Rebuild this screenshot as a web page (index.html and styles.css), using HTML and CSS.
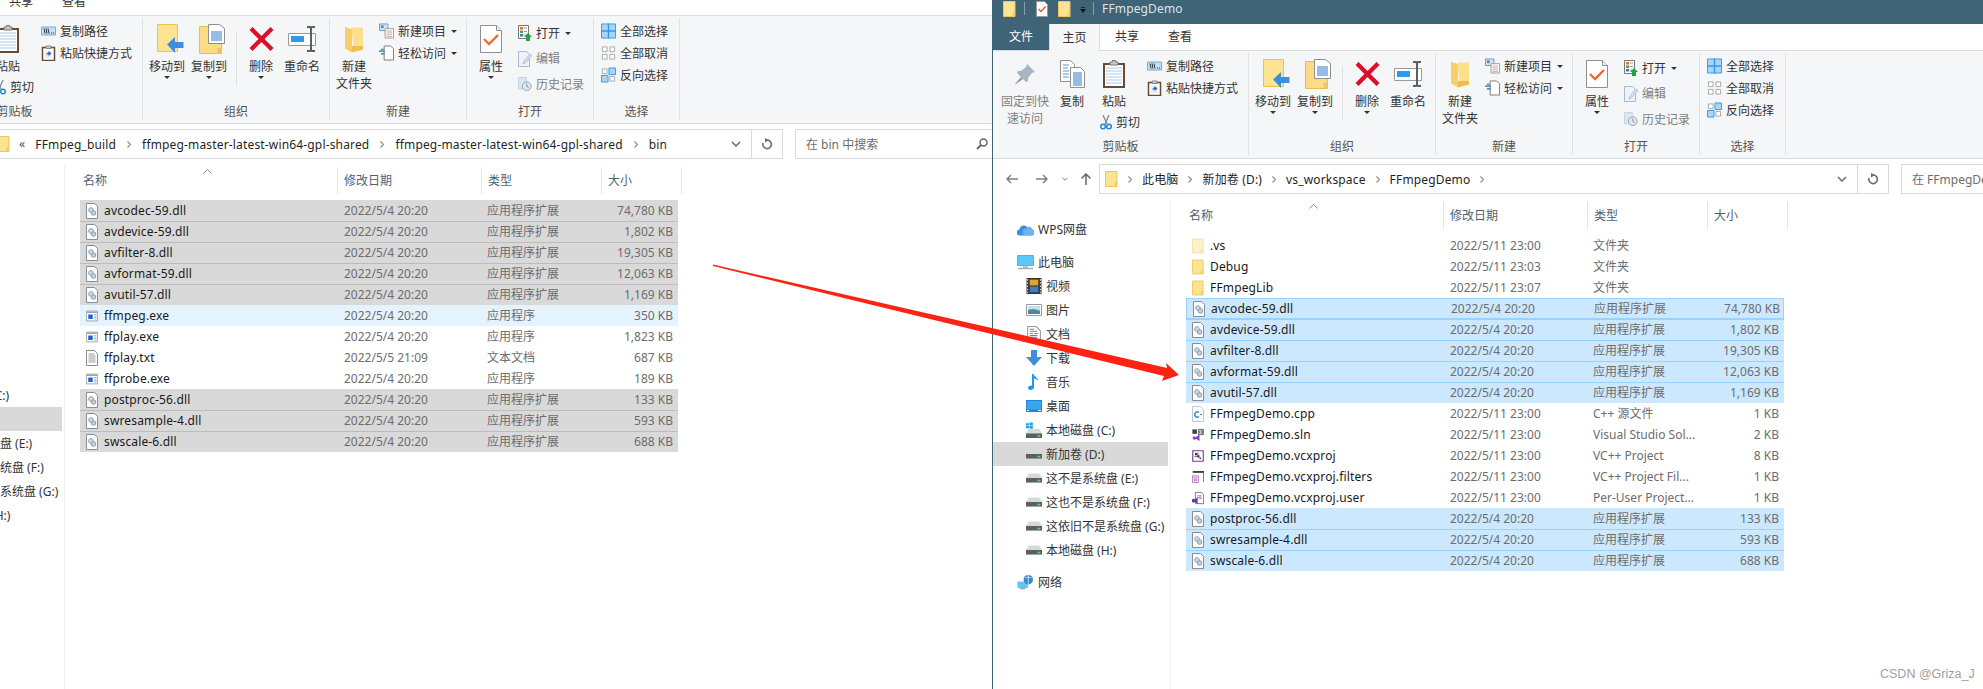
FILE: index.html
```html
<!DOCTYPE html>
<html lang="zh-CN">
<head>
    <meta charset="UTF-8">
    <title>FFmpegDemo</title>
    <link rel="stylesheet" href="styles.css">
</head>
<body>
<svg class="sprite" xmlns="http://www.w3.org/2000/svg">
    <symbol id="folder" viewBox="0 0 13 16"><path d="M.5.5h11.500v15H.5z" fill="#fde492" stroke="#efc65c"/><path d="M9.500 11.500h2.500v4H9.500z" fill="#f3cc63"/></symbol>
    <symbol id="page-check" viewBox="0 0 12 16"><path d="M.5.5h8l3 3v12H.5z" fill="#fff" stroke="#999"/><path d="M2.500 8l2.500 2.500 4.500-5" fill="none" stroke="#e8602a" stroke-width="1.500"/></symbol>
    <symbol id="pin" viewBox="0 0 22 22"><path d="M13 1l8 8-3 1-4 5 0 3-2 1-9-9 1-2 3 0 5-4z" fill="#a9b4c2"/><path d="M7 14l-6 7 1 0 7-5z" fill="#8d98a6"/></symbol>
    <symbol id="docs" viewBox="0 0 25 28"><path d="M.5.5h10l4 4v17H.5z" fill="#fff" stroke="#8f8f8f"/><path d="M10.500 7.500h10l4 4v16h-14z" fill="#fff" stroke="#8f8f8f"/><path d="M3 5h6M3 8h5M3 11h6M3 14h6M3 17h6" stroke="#5b9bd5"/><path d="M13 13h9M13 15h9M13 17h9M13 19h9M13 21h9M13 23h9M13 25h9" stroke="#2f78cf"/></symbol>
    <symbol id="clipboard" viewBox="0 0 22 28"><path d="M1 4h20v23H1z" fill="#fff" stroke="#6b4a33" stroke-width="2"/><path d="M3 8h16M3 11h16M3 14h16M3 17h16M3 20h16M3 23h16" stroke="#a9cdea"/><path d="M7 4V2h2.500V.5h3V2H15v3H7z" fill="#c9c9c9" stroke="#777"/></symbol>
    <symbol id="copy-path" viewBox="0 0 15 9"><path d="M.5.5h14v8H.5z" fill="#bfe0f7" stroke="#7fa9c7"/><path d="M3 2l1 5M5 2l1 5M7 2l1 5" stroke="#333"/><path d="M10 6.500h3.500" stroke="#333" stroke-dasharray="1 1"/></symbol>
    <symbol id="paste-link" viewBox="0 0 14 16"><path d="M1 2.500h12v13H1z" fill="#fff" stroke="#6b4a33" stroke-width="1.500"/><path d="M4.500 2.500V1h5v2.500h-5z" fill="#ccc" stroke="#777" stroke-width=".8"/><path d="M3.500 6h7v7h-7z" fill="#e8eef5"/><path d="M5 12V9.500h2V11l3-2.500L7 6v1.500C5.500 7.500 4.500 9 5 12z" fill="#2f66b5"/></symbol>
    <symbol id="scissors" viewBox="0 0 12 16"><path d="M3 1l4 9M9 1L5 10" stroke="#7d8894" stroke-width="1.300" fill="none"/><circle cx="3" cy="12.500" r="2.300" fill="none" stroke="#1f8ad6" stroke-width="1.500"/><circle cx="9" cy="12.500" r="2.300" fill="none" stroke="#1f8ad6" stroke-width="1.500"/></symbol>
    <symbol id="move-to" viewBox="0 0 27 30"><path d="M.5.5h20v27H.5z" fill="#fde492" stroke="#ecc14f"/><path d="M10 20.500L18 13v5h8.500v6H18v5z" fill="#3d8fd9"/></symbol>
    <symbol id="copy-to" viewBox="0 0 27 30"><path d="M.5 2.500h22v27H.5z" fill="#fbdc85" stroke="#e6bd58"/><path d="M18.500 24h4v5.500h-4z" fill="#efc560"/><path d="M9.500.5h11l5 4v15h-16z" fill="#fff" stroke="#8f8f8f"/><path d="M12 8h11M12 10h11M12 12h11M12 14h11M12 16h11" stroke="#2f78cf"/></symbol>
    <symbol id="delete" viewBox="0 0 25 24"><path d="M2 1.500l21 21M23 1.500l-21 21" stroke="#d8102a" stroke-width="4.300"/></symbol>
    <symbol id="rename" viewBox="0 0 28 26"><path d="M.5 7.500h27v12H.5z" fill="#fff" stroke="#9a9a9a"/><path d="M3 10h13v6H3z" fill="#2f9ae8"/><path d="M19 1h3l1 1.500L24 1h3M19 25h3l1-1.500 1 1.500h3M23 2v22" fill="none" stroke="#5f5f5f" stroke-width="2"/></symbol>
    <symbol id="new-folder" viewBox="0 0 18 27"><path d="M6 1.500l12 0v22H9z" fill="#fde08c"/><path d="M0 .5l7 3v23l-7-4z" fill="#f6cf6c"/><path d="M7 26.500l11-3V20H7z" fill="#eebf4f"/></symbol>
    <symbol id="new-item" viewBox="0 0 16 16"><path d="M.5.5h9v7H.5z" fill="#d4e6f5" stroke="#6c97b8"/><path d="M2 2h3v3H2z" fill="#4f8fc4"/><path d="M6.500 5.500h9v10h-9z" fill="#fff" stroke="#9a9a9a"/><path d="M8 8h6M8 10h6M8 12h6M8 14h6" stroke="#d9a0a0"/></symbol>
    <symbol id="easy-access" viewBox="0 0 16 16"><path d="M5.500.5h7l3 3v12h-10z" fill="#fff" stroke="#777"/><path d="M0 6h6M2 9h4M2 4h3" stroke="#1f6fb5" stroke-width="1.300"/></symbol>
    <symbol id="properties" viewBox="0 0 22 28"><path d="M.5.500h16l5 5v22H.5z" fill="#fff" stroke="#8f8f8f"/><path d="M16.500.5v5h5" fill="#eee" stroke="#8f8f8f"/><path d="M4 14l5 5 9-9" fill="none" stroke="#ef6a2a" stroke-width="2.300"/></symbol>
    <symbol id="open" viewBox="0 0 14 16"><path d="M.5.5h10v13H.5z" fill="#fff" stroke="#777"/><path d="M2 2h3v2.500H2z" fill="#ef6a2a"/><path d="M2 5.500h3V8H2z" fill="#39a845"/><path d="M2 9h3v2.500H2z" fill="#2f78cf"/><path d="M6 3h3M6 6.500h3M6 10h2" stroke="#999"/><path d="M10 8l4 4h-2v4H8v-4H6z" fill="#1ea838"/></symbol>
    <symbol id="edit" viewBox="0 0 14 16"><path d="M.5.5h8l3 3v12H.5z" fill="#eef3f9" stroke="#a9bad0"/><path d="M5 13l1-3 6-7 2 1.500-6 7z" fill="#d5dfeb" stroke="#a9bad0" stroke-width=".8"/></symbol>
    <symbol id="history" viewBox="0 0 16 16"><path d="M.5.5h9v13H.5z" fill="#dde5ef" stroke="#c2cfdf"/><circle cx="10" cy="10.500" r="5" fill="#dfe6ef" stroke="#8d9db3"/><path d="M10 7.500v3l2 1.500" fill="none" stroke="#73859d"/></symbol>
    <symbol id="select-all" viewBox="0 0 16 16"><path d="M.5.5h15v15H.5z" fill="#a9d4f5" stroke="#2f9ae8"/><path d="M8 0v16M0 8h16" stroke="#2f9ae8" stroke-width="1.500"/></symbol>
    <symbol id="select-none" viewBox="0 0 16 16"><path d="M1.500 1.500h5v5h-5zM9.500 1.500h5v5h-5zM1.500 9.500h5v5h-5zM9.500 9.500h5v5h-5z" fill="#fff" stroke="#a6a6a6"/></symbol>
    <symbol id="select-inv" viewBox="0 0 16 16"><path d="M1.500 1.500h5v5h-5zM9.500 9.500h5v5h-5z" fill="#fff" stroke="#a6a6a6"/><path d="M8.500.5h7v7h-7zM.5 8.500h7v7h-7z" fill="#a9d4f5" stroke="#2f9ae8"/></symbol>
    <symbol id="dll" viewBox="0 0 12 16"><path d="M.5.5h8l3 3v12H.5z" fill="#fff" stroke="#8c8c8c"/><circle cx="5" cy="7" r="2.300" fill="#d4dde6" stroke="#8ca0b3"/><circle cx="7.500" cy="10" r="2.300" fill="#c3ced9" stroke="#8ca0b3"/></symbol>
    <symbol id="exe" viewBox="0 0 16 14"><path d="M.5.5h15v13H.5z" fill="#fff" stroke="#8c8c8c"/><path d="M1 1h14v2H1z" fill="#9aa6b2"/><path d="M3 5h6v6H3z" fill="#1669d2"/><path d="M11 5h3M11 7h3M11 9h3M11 11h3" stroke="#999"/></symbol>
    <symbol id="txt" viewBox="0 0 12 16"><path d="M.5.5h8l3 3v12H.5z" fill="#fff" stroke="#8c8c8c"/><path d="M2.500 4h6M2.500 6h7M2.500 8h7M2.500 10h7M2.500 12h7" stroke="#999"/></symbol>
    <symbol id="cpp" viewBox="0 0 12 16"><path d="M.5.5h8l3 3v12H.5z" fill="#fff" stroke="#c0c8d0"/><path d="M7 6.500a2.600 2.600 0 1 0 0 4" fill="none" stroke="#3f8fb5" stroke-width="1.500"/><path d="M8 8.500h2" stroke="#3f8fb5"/></symbol>
    <symbol id="sln" viewBox="0 0 16 16"><path d="M0 0h16v8H0z" fill="#fff"/><path d="M.5.500h6v6h-6z" fill="#444"/><path d="M8.500.5h7v7h-7z" fill="#fff" stroke="#444"/><path d="M10 2v4M12 2h2v4h-2z" fill="none" stroke="#444"/><path d="M1 11l2-1.500 2 1.500 5-4v9l-5-3-2 1.500-2-1.500z" fill="#8a3fc4"/></symbol>
    <symbol id="vcxproj" viewBox="0 0 16 16"><path d="M1 1h14v14H1z" fill="#fff" stroke="#7a3b96" stroke-width="1.500"/><path d="M4 4h3v3H4zM7 7h3v3H7zM10 10h2v2h-2z" fill="#333"/><path d="M7.500 3.500h1v3h-1zM3.500 8h3v1h-3z" fill="#333"/></symbol>
    <symbol id="filters" viewBox="0 0 16 16"><path d="M1.500 1h14v14" fill="none" stroke="#444"/><path d="M1 0h15v2.500H1z" fill="#444"/><path d="M.5 6.500h8v9h-8z" fill="#fff" stroke="#9b4fb0"/><path d="M2 9h5M2 11h5M2 13h5" stroke="#9b4fb0"/></symbol>
    <symbol id="user" viewBox="0 0 16 16"><path d="M4.500.5h8l3 3v12h-11z" fill="#fff" stroke="#555"/><path d="M7 5h6M7 7h6M9 9h4" stroke="#777"/><path d="M0 10l2-1.500 1.500 1.500 4-3v8.500l-4-2.500-1.500 1.500-2-1.500z" fill="#6a2fa8"/></symbol>
    <symbol id="cloud" viewBox="0 0 17 12"><path d="M3 12a3 3 0 0 1-.5-6A4.500 4.500 0 0 1 11 4.500a3.800 3.800 0 0 1 2 7.500z" fill="#3b8fe0"/><path d="M9 12a3.500 3.500 0 0 1 0-7 3.500 3.500 0 0 1 6.500 1A3 3 0 0 1 14 12z" fill="#6db2ee"/></symbol>
    <symbol id="monitor" viewBox="0 0 17 15"><path d="M.5.5h16v10H.5z" fill="#5cc8f5" stroke="#7da5bd"/><path d="M6 11h5v2H6z" fill="#b8c6d0"/><path d="M1 13.500h15" stroke="#9db0bd" stroke-width="1.500"/></symbol>
    <symbol id="film" viewBox="0 0 14 15"><path d="M0 0h14v15H0z" fill="#333"/><path d="M3 1.500h8v5.500H3z" fill="#e5a02e"/><path d="M3 8h8v5.500H3z" fill="#3f7fc4"/><path d="M1 1v13M13 1v13" stroke="#ddd" stroke-dasharray="1.500 1.500"/></symbol>
    <symbol id="picture" viewBox="0 0 16 12"><path d="M.5.500h15v11H.5z" fill="#fff" stroke="#9a9a9a"/><path d="M2 2h12v4H2z" fill="#c3def2"/><path d="M2 6l5-1 7 1.500V10H2z" fill="#4d8a8f"/></symbol>
    <symbol id="doc" viewBox="0 0 13 15"><path d="M.5.5h8l4 4v10H.5z" fill="#fff" stroke="#999"/><path d="M2.500 3h4M2.500 5h7M2.500 7h3M7 7h3M2.500 9h7M2.500 11h7" stroke="#3f8fd5"/></symbol>
    <symbol id="download" viewBox="0 0 16 16"><path d="M5 0h6v7h5l-8 9-8-9h5z" fill="#3d8ede"/></symbol>
    <symbol id="music" viewBox="0 0 12 16"><path d="M4 0h1.500c.5 3 4.500 3.500 5 7-1-1.500-3-2.500-4.500-2.500V13c0 1.800-1.500 3-3.300 3C1 16 0 15 0 13.800c0-1.500 2-2.800 4-2.300z" fill="#1a9aee"/></symbol>
    <symbol id="screen" viewBox="0 0 16 12"><path d="M0 0h16v12H0z" fill="#1b87d8"/><path d="M1 1h14v8.500H1z" fill="#37a6ee"/><path d="M1 10.500h2M12 10.500h3" stroke="#dff"/></symbol>
    <symbol id="drive" viewBox="0 0 14 8"><path d="M2.500 0h9L14 4H0z" fill="#d5d9dc"/><path d="M0 4h14v4H0z" fill="#5c5f62"/><path d="M10 5.500h2.500v1.500H10z" fill="#5fd35f"/></symbol>
    <symbol id="drive-win" viewBox="0 0 14 14"><path d="M0 1h2.500v2H0zM3 .5h3V3H3zM0 3.500h2.500v2H0zM3 3.500h3V6H3z" fill="#1ba1e8"/><path d="M2.500 6h9L14 10H0z" fill="#d5d9dc"/><path d="M0 10h14v4H0z" fill="#5c5f62"/><path d="M10 11.500h2.500V13H10z" fill="#5fd35f"/></symbol>
    <symbol id="network" viewBox="0 0 17 16"><path d="M0 7h11v7H0z" fill="#5cc8f5"/><path d="M3 14.500h5" stroke="#8aa" stroke-width="1.500"/><circle cx="11.500" cy="5" r="5" fill="#3f86c8"/><path d="M8 3c2-1 4-1 7 0M11.500 0v10" stroke="#bfe0f7" fill="none"/></symbol>
    <symbol id="chevron" viewBox="0 0 4 7"><path d="M.5.500l3 3-3 3" fill="none" stroke="#8a8a8a" stroke-width="1.200"/></symbol>
    <symbol id="chevron-down" viewBox="0 0 10 6"><path d="M1 1l4 4 4-4" fill="none" stroke="#6d6d6d" stroke-width="1.500"/></symbol>
    <symbol id="refresh" viewBox="0 0 12 12"><path d="M6.500 2a4.300 4.300 0 1 1-4.500 3" fill="none" stroke="#6d6d6d" stroke-width="1.600"/><path d="M4 0l4 2-4 2.500z" fill="#6d6d6d"/></symbol>
    <symbol id="search" viewBox="0 0 12 12"><circle cx="7.500" cy="4.500" r="3.500" fill="none" stroke="#666" stroke-width="1.500"/><path d="M5 7l-4 4" stroke="#666" stroke-width="2"/></symbol>
    <symbol id="back" viewBox="0 0 12 10"><path d="M12 5H1M5 1L1 5l4 4" fill="none" stroke="#808080" stroke-width="1.500"/></symbol>
    <symbol id="forward" viewBox="0 0 12 10"><path d="M0 5h11M7 1l4 4-4 4" fill="none" stroke="#808080" stroke-width="1.500"/></symbol>
    <symbol id="up" viewBox="0 0 12 12"><path d="M6 12V1M1.500 5.500L6 1l4.500 4.500" fill="none" stroke="#666" stroke-width="1.500"/></symbol>
</svg>

<div class="desktop">
    <section class="window window-left">
        <div class="window-inner">
            <header class="titlebar">
                <svg class="ic-folder"><use href="#folder"/></svg>
                <span class="title-sep"></span>
                <svg class="ic-page"><use href="#page-check"/></svg>
                <svg class="ic-folder second"><use href="#folder"/></svg>
                <span class="qat-caret"></span>
                <span class="title-sep last"></span>
                <span class="title-text">bin</span>
            </header>
            <nav class="tabs">
                <span class="tab tab-file">文件</span>
                <span class="tab tab-home">主页</span>
                <span class="tab tab-share">共享</span>
                <span class="tab tab-view">查看</span>
            </nav>
            <div class="ribbon">
                <div class="group group-clip">
                    <div class="group-body">
                        <div class="big big-pin disabled"><span class="big-icon"><svg class="ic-pin"><use href="#pin"/></svg></span><span>固定到快<br>速访问</span></div>
                        <div class="big big-copy"><span class="big-icon"><svg class="ic-docs"><use href="#docs"/></svg></span><span>复制</span></div>
                        <div class="paste-col">
                            <div class="big big-paste"><span class="big-icon"><svg class="ic-clipboard"><use href="#clipboard"/></svg></span><span>粘贴</span></div>
                            <div class="small cut"><svg class="ic-small"><use href="#scissors"/></svg>剪切</div>
                        </div>
                        <div class="stack stack-clip">
                            <div class="small"><svg class="ic-small"><use href="#copy-path"/></svg>复制路径</div>
                            <div class="small"><svg class="ic-small"><use href="#paste-link"/></svg>粘贴快捷方式</div>
                        </div>
                    </div>
                    <div class="group-label">剪贴板</div>
                </div>
                <div class="group group-org">
                    <div class="group-body">
                        <div class="big big-move"><span class="big-icon"><svg class="ic-folder-big"><use href="#move-to"/></svg></span><span>移动到</span><i class="caret"></i></div>
                        <div class="big big-move"><span class="big-icon"><svg class="ic-folder-big"><use href="#copy-to"/></svg></span><span>复制到</span><i class="caret"></i></div>
                        <span class="vsep"></span>
                        <div class="big big-delete"><span class="big-icon"><svg class="ic-delete"><use href="#delete"/></svg></span><span>删除</span><i class="caret"></i></div>
                        <div class="big big-rename"><span class="big-icon"><svg class="ic-rename"><use href="#rename"/></svg></span><span>重命名</span></div>
                    </div>
                    <div class="group-label">组织</div>
                </div>
                <div class="group group-new">
                    <div class="group-body">
                        <div class="big big-newfolder"><span class="big-icon"><svg class="ic-newfolder"><use href="#new-folder"/></svg></span><span>新建<br>文件夹</span></div>
                        <div class="stack stack-new">
                            <div class="small"><svg class="ic-small"><use href="#new-item"/></svg>新建项目<i class="caret caret-side"></i></div>
                            <div class="small"><svg class="ic-small"><use href="#easy-access"/></svg>轻松访问<i class="caret caret-side"></i></div>
                        </div>
                    </div>
                    <div class="group-label">新建</div>
                </div>
                <div class="group group-open">
                    <div class="group-body">
                        <div class="big big-prop"><span class="big-icon"><svg class="ic-prop"><use href="#properties"/></svg></span><span>属性</span><i class="caret"></i></div>
                        <div class="stack stack-open">
                            <div class="small"><svg class="ic-small"><use href="#open"/></svg>打开<i class="caret caret-side"></i></div>
                            <div class="small disabled"><svg class="ic-small"><use href="#edit"/></svg>编辑</div>
                            <div class="small disabled"><svg class="ic-small"><use href="#history"/></svg>历史记录</div>
                        </div>
                    </div>
                    <div class="group-label">打开</div>
                </div>
                <div class="group group-select">
                    <div class="group-body">
                        <div class="stack">
                            <div class="small"><svg class="ic-small"><use href="#select-all"/></svg>全部选择</div>
                            <div class="small"><svg class="ic-small"><use href="#select-none"/></svg>全部取消</div>
                            <div class="small"><svg class="ic-small"><use href="#select-inv"/></svg>反向选择</div>
                        </div>
                    </div>
                    <div class="group-label">选择</div>
                </div>
            </div>
            <div class="address-row">
                <div class="nav-btns">
                    <svg class="btn-back"><use href="#back"/></svg>
                    <svg class="btn-forward"><use href="#forward"/></svg>
                    <svg class="btn-down"><use href="#chevron-down"/></svg>
                    <svg class="btn-up"><use href="#up"/></svg>
                </div>
                <div class="address-box">
                    <div class="crumbs">
                        <svg class="ic-folder"><use href="#folder"/></svg>
                        <span class="crumb-more">«</span>
                        <span>FFmpeg_build</span>
                        <svg class="crumb-sep"><use href="#chevron"/></svg>
                        <span>ffmpeg-master-latest-win64-gpl-shared</span>
                        <svg class="crumb-sep"><use href="#chevron"/></svg>
                        <span>ffmpeg-master-latest-win64-gpl-shared</span>
                        <svg class="crumb-sep"><use href="#chevron"/></svg>
                        <span>bin</span>
                    </div>
                    <svg class="addr-down"><use href="#chevron-down"/></svg>
                    <div class="addr-refresh"><svg class="ic-refresh"><use href="#refresh"/></svg></div>
                </div>
                <div class="search-box"><span>在 bin 中搜索</span><svg class="ic-search"><use href="#search"/></svg></div>
            </div>
            <div class="main">
                <aside class="tree">
                    <div class="tree-item top wps"><svg class="ic-top"><use href="#cloud"/></svg>WPS网盘</div>
                    <div class="tree-item top"><svg class="ic-top"><use href="#monitor"/></svg>此电脑</div>
                    <div class="tree-item"><svg class="ic-item"><use href="#film"/></svg>视频</div>
                    <div class="tree-item"><svg class="ic-item"><use href="#picture"/></svg>图片</div>
                    <div class="tree-item"><svg class="ic-item"><use href="#doc"/></svg>文档</div>
                    <div class="tree-item"><svg class="ic-item"><use href="#download"/></svg>下载</div>
                    <div class="tree-item"><svg class="ic-item"><use href="#music"/></svg>音乐</div>
                    <div class="tree-item"><svg class="ic-item"><use href="#screen"/></svg>桌面</div>
                    <div class="tree-item"><svg class="ic-item"><use href="#drive-win"/></svg>本地磁盘 (C:)</div>
                    <div class="tree-item current"><svg class="ic-item"><use href="#drive"/></svg>新加卷 (D:)</div>
                    <div class="tree-item"><svg class="ic-item"><use href="#drive"/></svg>这不是系统盘 (E:)</div>
                    <div class="tree-item"><svg class="ic-item"><use href="#drive"/></svg>这也不是系统盘 (F:)</div>
                    <div class="tree-item"><svg class="ic-item"><use href="#drive"/></svg>这依旧不是系统盘 (G:)</div>
                    <div class="tree-item"><svg class="ic-item"><use href="#drive"/></svg>本地磁盘 (H:)</div>
                    <div class="tree-item top net"><svg class="ic-top"><use href="#network"/></svg>网络</div>
                </aside>
                <div class="files">
                    <div class="file-head">
                        <div class="head-cell head-name">名称<svg class="sort-arrow" viewBox="0 0 9 5"><path d="M.5 4.500l4-4 4 4" fill="none" stroke="#888"/></svg></div>
                        <div class="head-cell head-date">修改日期</div>
                        <div class="head-cell head-type">类型</div>
                        <div class="head-cell head-size">大小</div>
                    </div>
                    <div class="row sel"><div class="c-name"><svg class="ic-file"><use href="#dll"/></svg>avcodec-59.dll</div><div class="c-date">2022/5/4 20:20</div><div class="c-type">应用程序扩展</div><div class="c-size">74,780 KB</div></div>
                    <div class="row sel"><div class="c-name"><svg class="ic-file"><use href="#dll"/></svg>avdevice-59.dll</div><div class="c-date">2022/5/4 20:20</div><div class="c-type">应用程序扩展</div><div class="c-size">1,802 KB</div></div>
                    <div class="row sel"><div class="c-name"><svg class="ic-file"><use href="#dll"/></svg>avfilter-8.dll</div><div class="c-date">2022/5/4 20:20</div><div class="c-type">应用程序扩展</div><div class="c-size">19,305 KB</div></div>
                    <div class="row sel"><div class="c-name"><svg class="ic-file"><use href="#dll"/></svg>avformat-59.dll</div><div class="c-date">2022/5/4 20:20</div><div class="c-type">应用程序扩展</div><div class="c-size">12,063 KB</div></div>
                    <div class="row sel"><div class="c-name"><svg class="ic-file"><use href="#dll"/></svg>avutil-57.dll</div><div class="c-date">2022/5/4 20:20</div><div class="c-type">应用程序扩展</div><div class="c-size">1,169 KB</div></div>
                    <div class="row hover"><div class="c-name"><svg class="ic-file"><use href="#exe"/></svg>ffmpeg.exe</div><div class="c-date">2022/5/4 20:20</div><div class="c-type">应用程序</div><div class="c-size">350 KB</div></div>
                    <div class="row"><div class="c-name"><svg class="ic-file"><use href="#exe"/></svg>ffplay.exe</div><div class="c-date">2022/5/4 20:20</div><div class="c-type">应用程序</div><div class="c-size">1,823 KB</div></div>
                    <div class="row"><div class="c-name"><svg class="ic-file"><use href="#txt"/></svg>ffplay.txt</div><div class="c-date">2022/5/5 21:09</div><div class="c-type">文本文档</div><div class="c-size">687 KB</div></div>
                    <div class="row"><div class="c-name"><svg class="ic-file"><use href="#exe"/></svg>ffprobe.exe</div><div class="c-date">2022/5/4 20:20</div><div class="c-type">应用程序</div><div class="c-size">189 KB</div></div>
                    <div class="row sel"><div class="c-name"><svg class="ic-file"><use href="#dll"/></svg>postproc-56.dll</div><div class="c-date">2022/5/4 20:20</div><div class="c-type">应用程序扩展</div><div class="c-size">133 KB</div></div>
                    <div class="row sel"><div class="c-name"><svg class="ic-file"><use href="#dll"/></svg>swresample-4.dll</div><div class="c-date">2022/5/4 20:20</div><div class="c-type">应用程序扩展</div><div class="c-size">593 KB</div></div>
                    <div class="row sel"><div class="c-name"><svg class="ic-file"><use href="#dll"/></svg>swscale-6.dll</div><div class="c-date">2022/5/4 20:20</div><div class="c-type">应用程序扩展</div><div class="c-size">688 KB</div></div>
                </div>
            </div>
        </div>
    </section>

    <section class="window window-right">
        <div class="window-inner">
            <header class="titlebar">
                <svg class="ic-folder"><use href="#folder"/></svg>
                <span class="title-sep"></span>
                <svg class="ic-page"><use href="#page-check"/></svg>
                <svg class="ic-folder second"><use href="#folder"/></svg>
                <span class="qat-caret"></span>
                <span class="title-sep last"></span>
                <span class="title-text">FFmpegDemo</span>
            </header>
            <nav class="tabs">
                <span class="tab tab-file">文件</span>
                <span class="tab tab-home">主页</span>
                <span class="tab tab-share">共享</span>
                <span class="tab tab-view">查看</span>
            </nav>
            <div class="ribbon">
                <div class="group group-clip">
                    <div class="group-body">
                        <div class="big big-pin disabled"><span class="big-icon"><svg class="ic-pin"><use href="#pin"/></svg></span><span>固定到快<br>速访问</span></div>
                        <div class="big big-copy"><span class="big-icon"><svg class="ic-docs"><use href="#docs"/></svg></span><span>复制</span></div>
                        <div class="paste-col">
                            <div class="big big-paste"><span class="big-icon"><svg class="ic-clipboard"><use href="#clipboard"/></svg></span><span>粘贴</span></div>
                            <div class="small cut"><svg class="ic-small"><use href="#scissors"/></svg>剪切</div>
                        </div>
                        <div class="stack stack-clip">
                            <div class="small"><svg class="ic-small"><use href="#copy-path"/></svg>复制路径</div>
                            <div class="small"><svg class="ic-small"><use href="#paste-link"/></svg>粘贴快捷方式</div>
                        </div>
                    </div>
                    <div class="group-label">剪贴板</div>
                </div>
                <div class="group group-org">
                    <div class="group-body">
                        <div class="big big-move"><span class="big-icon"><svg class="ic-folder-big"><use href="#move-to"/></svg></span><span>移动到</span><i class="caret"></i></div>
                        <div class="big big-move"><span class="big-icon"><svg class="ic-folder-big"><use href="#copy-to"/></svg></span><span>复制到</span><i class="caret"></i></div>
                        <span class="vsep"></span>
                        <div class="big big-delete"><span class="big-icon"><svg class="ic-delete"><use href="#delete"/></svg></span><span>删除</span><i class="caret"></i></div>
                        <div class="big big-rename"><span class="big-icon"><svg class="ic-rename"><use href="#rename"/></svg></span><span>重命名</span></div>
                    </div>
                    <div class="group-label">组织</div>
                </div>
                <div class="group group-new">
                    <div class="group-body">
                        <div class="big big-newfolder"><span class="big-icon"><svg class="ic-newfolder"><use href="#new-folder"/></svg></span><span>新建<br>文件夹</span></div>
                        <div class="stack stack-new">
                            <div class="small"><svg class="ic-small"><use href="#new-item"/></svg>新建项目<i class="caret caret-side"></i></div>
                            <div class="small"><svg class="ic-small"><use href="#easy-access"/></svg>轻松访问<i class="caret caret-side"></i></div>
                        </div>
                    </div>
                    <div class="group-label">新建</div>
                </div>
                <div class="group group-open">
                    <div class="group-body">
                        <div class="big big-prop"><span class="big-icon"><svg class="ic-prop"><use href="#properties"/></svg></span><span>属性</span><i class="caret"></i></div>
                        <div class="stack stack-open">
                            <div class="small"><svg class="ic-small"><use href="#open"/></svg>打开<i class="caret caret-side"></i></div>
                            <div class="small disabled"><svg class="ic-small"><use href="#edit"/></svg>编辑</div>
                            <div class="small disabled"><svg class="ic-small"><use href="#history"/></svg>历史记录</div>
                        </div>
                    </div>
                    <div class="group-label">打开</div>
                </div>
                <div class="group group-select">
                    <div class="group-body">
                        <div class="stack">
                            <div class="small"><svg class="ic-small"><use href="#select-all"/></svg>全部选择</div>
                            <div class="small"><svg class="ic-small"><use href="#select-none"/></svg>全部取消</div>
                            <div class="small"><svg class="ic-small"><use href="#select-inv"/></svg>反向选择</div>
                        </div>
                    </div>
                    <div class="group-label">选择</div>
                </div>
            </div>
            <div class="address-row">
                <div class="nav-btns">
                    <svg class="btn-back"><use href="#back"/></svg>
                    <svg class="btn-forward"><use href="#forward"/></svg>
                    <svg class="btn-down"><use href="#chevron-down"/></svg>
                    <svg class="btn-up"><use href="#up"/></svg>
                </div>
                <div class="address-box">
                    <div class="crumbs">
                        <svg class="ic-folder"><use href="#folder"/></svg>
                        <svg class="crumb-sep"><use href="#chevron"/></svg>
                        <span>此电脑</span>
                        <svg class="crumb-sep"><use href="#chevron"/></svg>
                        <span>新加卷 (D:)</span>
                        <svg class="crumb-sep"><use href="#chevron"/></svg>
                        <span>vs_workspace</span>
                        <svg class="crumb-sep"><use href="#chevron"/></svg>
                        <span>FFmpegDemo</span>
                        <svg class="crumb-sep"><use href="#chevron"/></svg>
                    </div>
                    <svg class="addr-down"><use href="#chevron-down"/></svg>
                    <div class="addr-refresh"><svg class="ic-refresh"><use href="#refresh"/></svg></div>
                </div>
                <div class="search-box"><span>在 FFmpegDemo 中搜索</span></div>
            </div>
            <div class="main">
                <aside class="tree">
                    <div class="tree-item top wps"><svg class="ic-top"><use href="#cloud"/></svg>WPS网盘</div>
                    <div class="tree-item top"><svg class="ic-top"><use href="#monitor"/></svg>此电脑</div>
                    <div class="tree-item"><svg class="ic-item"><use href="#film"/></svg>视频</div>
                    <div class="tree-item"><svg class="ic-item"><use href="#picture"/></svg>图片</div>
                    <div class="tree-item"><svg class="ic-item"><use href="#doc"/></svg>文档</div>
                    <div class="tree-item"><svg class="ic-item"><use href="#download"/></svg>下载</div>
                    <div class="tree-item"><svg class="ic-item"><use href="#music"/></svg>音乐</div>
                    <div class="tree-item"><svg class="ic-item"><use href="#screen"/></svg>桌面</div>
                    <div class="tree-item"><svg class="ic-item"><use href="#drive-win"/></svg>本地磁盘 (C:)</div>
                    <div class="tree-item current"><svg class="ic-item"><use href="#drive"/></svg>新加卷 (D:)</div>
                    <div class="tree-item"><svg class="ic-item"><use href="#drive"/></svg>这不是系统盘 (E:)</div>
                    <div class="tree-item"><svg class="ic-item"><use href="#drive"/></svg>这也不是系统盘 (F:)</div>
                    <div class="tree-item"><svg class="ic-item"><use href="#drive"/></svg>这依旧不是系统盘 (G:)</div>
                    <div class="tree-item"><svg class="ic-item"><use href="#drive"/></svg>本地磁盘 (H:)</div>
                    <div class="tree-item top net"><svg class="ic-top"><use href="#network"/></svg>网络</div>
                </aside>
                <div class="files">
                    <div class="file-head">
                        <div class="head-cell head-name">名称<svg class="sort-arrow" viewBox="0 0 9 5"><path d="M.5 4.500l4-4 4 4" fill="none" stroke="#888"/></svg></div>
                        <div class="head-cell head-date">修改日期</div>
                        <div class="head-cell head-type">类型</div>
                        <div class="head-cell head-size">大小</div>
                    </div>
                    <div class="row"><div class="c-name"><svg class="ic-file hidden-folder"><use href="#folder"/></svg>.vs</div><div class="c-date">2022/5/11 23:00</div><div class="c-type">文件夹</div><div class="c-size"></div></div>
                    <div class="row"><div class="c-name"><svg class="ic-file"><use href="#folder"/></svg>Debug</div><div class="c-date">2022/5/11 23:03</div><div class="c-type">文件夹</div><div class="c-size"></div></div>
                    <div class="row"><div class="c-name"><svg class="ic-file"><use href="#folder"/></svg>FFmpegLib</div><div class="c-date">2022/5/11 23:07</div><div class="c-type">文件夹</div><div class="c-size"></div></div>
                    <div class="row sel focus"><div class="c-name"><svg class="ic-file"><use href="#dll"/></svg>avcodec-59.dll</div><div class="c-date">2022/5/4 20:20</div><div class="c-type">应用程序扩展</div><div class="c-size">74,780 KB</div></div>
                    <div class="row sel"><div class="c-name"><svg class="ic-file"><use href="#dll"/></svg>avdevice-59.dll</div><div class="c-date">2022/5/4 20:20</div><div class="c-type">应用程序扩展</div><div class="c-size">1,802 KB</div></div>
                    <div class="row sel"><div class="c-name"><svg class="ic-file"><use href="#dll"/></svg>avfilter-8.dll</div><div class="c-date">2022/5/4 20:20</div><div class="c-type">应用程序扩展</div><div class="c-size">19,305 KB</div></div>
                    <div class="row sel"><div class="c-name"><svg class="ic-file"><use href="#dll"/></svg>avformat-59.dll</div><div class="c-date">2022/5/4 20:20</div><div class="c-type">应用程序扩展</div><div class="c-size">12,063 KB</div></div>
                    <div class="row sel"><div class="c-name"><svg class="ic-file"><use href="#dll"/></svg>avutil-57.dll</div><div class="c-date">2022/5/4 20:20</div><div class="c-type">应用程序扩展</div><div class="c-size">1,169 KB</div></div>
                    <div class="row"><div class="c-name"><svg class="ic-file"><use href="#cpp"/></svg>FFmpegDemo.cpp</div><div class="c-date">2022/5/11 23:00</div><div class="c-type">C++ 源文件</div><div class="c-size">1 KB</div></div>
                    <div class="row"><div class="c-name"><svg class="ic-file"><use href="#sln"/></svg>FFmpegDemo.sln</div><div class="c-date">2022/5/11 23:00</div><div class="c-type">Visual Studio Sol...</div><div class="c-size">2 KB</div></div>
                    <div class="row"><div class="c-name"><svg class="ic-file"><use href="#vcxproj"/></svg>FFmpegDemo.vcxproj</div><div class="c-date">2022/5/11 23:00</div><div class="c-type">VC++ Project</div><div class="c-size">8 KB</div></div>
                    <div class="row"><div class="c-name"><svg class="ic-file"><use href="#filters"/></svg>FFmpegDemo.vcxproj.filters</div><div class="c-date">2022/5/11 23:00</div><div class="c-type">VC++ Project Fil...</div><div class="c-size">1 KB</div></div>
                    <div class="row"><div class="c-name"><svg class="ic-file"><use href="#user"/></svg>FFmpegDemo.vcxproj.user</div><div class="c-date">2022/5/11 23:00</div><div class="c-type">Per-User Project...</div><div class="c-size">1 KB</div></div>
                    <div class="row sel"><div class="c-name"><svg class="ic-file"><use href="#dll"/></svg>postproc-56.dll</div><div class="c-date">2022/5/4 20:20</div><div class="c-type">应用程序扩展</div><div class="c-size">133 KB</div></div>
                    <div class="row sel"><div class="c-name"><svg class="ic-file"><use href="#dll"/></svg>swresample-4.dll</div><div class="c-date">2022/5/4 20:20</div><div class="c-type">应用程序扩展</div><div class="c-size">593 KB</div></div>
                    <div class="row sel"><div class="c-name"><svg class="ic-file"><use href="#dll"/></svg>swscale-6.dll</div><div class="c-date">2022/5/4 20:20</div><div class="c-type">应用程序扩展</div><div class="c-size">688 KB</div></div>
                </div>
            </div>
        </div>
    </section>

    <svg class="red-arrow" viewBox="0 0 1983 689">
        <path d="M713 264.500L1167 368L1166 363L1179 375L1162 381L1164 376L713 266z" fill="#fe2213"/>
    </svg>
    <span class="watermark">CSDN @Griza_J</span>
</div>
</body>
</html>
```

FILE: styles.css
```css
* {
    box-sizing: border-box;
}
html, body {
    margin: 0;
    height: 100%;
    overflow: hidden;
    background: #fff;
}
body {
    font-family: "Noto Sans", "Noto Sans CJK SC", sans-serif;
    font-size: 12px;
    line-height: 17px;
    color: #333;
}
svg {
    display: block;
    flex: none;
}
.sprite {
    display: none;
}

/* windows */
.desktop {
    position: relative;
    display: flex;
    width: 1983px;
    height: 689px;
}
.window {
    height: 689px;
    overflow: hidden;
    background: #fff;
}
.window-left {
    width: 992px;
}
.window-right {
    flex: 1;
    border-left: 1px solid #3f6478;
}
.window-inner {
    width: 1105px;
}
/* the left window is pushed off the screen at the top and left */
.window-left .window-inner {
    margin-left: -113px;
    margin-top: -35px;
}

/* title bar */
.titlebar {
    display: flex;
    height: 24px;
    padding: 1px 0 0 10px;
    background: #3f6478;
}
.ic-folder {
    width: 13px;
    height: 16px;
}
.ic-folder.second {
    margin-left: 10px;
}
.ic-page {
    width: 12px;
    height: 16px;
    margin-left: 11px;
}
.title-sep {
    width: 1px;
    height: 13px;
    margin: 1px 0 0 8px;
    background: #86a0ad;
}
.title-sep.last {
    margin-left: 7px;
}
.qat-caret {
    width: 6px;
    height: 6px;
    margin: 6px 0 0 9px;
    border-top: 1px solid #111;
    border-left: 3px solid transparent;
    border-right: 3px solid transparent;
    position: relative;
}
.qat-caret::after {
    content: "";
    position: absolute;
    top: 1px;
    left: -3px;
    border-top: 4px solid #111;
    border-left: 3px solid transparent;
    border-right: 3px solid transparent;
}
.title-text {
    margin: -1px 0 0 8px;
    color: #dbe5ea;
    letter-spacing: .15px;
}

/* tabs */
.tabs {
    display: flex;
    height: 27px;
    background: #fff;
    border-bottom: 1px solid #dadbdc;
}
.tab {
    height: 27px;
    line-height: 25px;
    text-align: center;
}
.tab-file {
    width: 56px;
    background: #3f6478;
    color: #fff;
    height: 26px;
}
.tab-home {
    width: 51px;
    background: #f5f6f7;
    border: 1px solid #dadbdc;
    border-top-color: #f5f6f7;
    border-bottom: none;
}
.tab-share {
    width: 54px;
}
.tab-view {
    width: 52px;
}

/* ribbon */
.ribbon {
    display: flex;
    height: 108px;
    padding-top: 2px;
    background: #f5f6f7;
    border-bottom: 1px solid #dadbdc;
}
.group {
    display: flex;
    flex-direction: column;
    height: 102px;
    border-right: 1px solid #e0e2e4;
}
.group-clip {
    width: 256px;
}
.group-org {
    width: 187px;
}
.group-new {
    width: 137px;
}
.group-open {
    width: 127px;
}
.group-select {
    width: 86px;
}
.group-body {
    display: flex;
    flex: 1;
    padding-top: 5px;
}
.group-label {
    height: 18px;
    line-height: 20px;
    text-align: center;
    color: #555;
}
.big {
    display: flex;
    flex-direction: column;
    align-items: center;
    text-align: center;
    white-space: nowrap;
}
.big-icon {
    display: flex;
    align-items: center;
    justify-content: center;
    height: 32px;
    margin-bottom: 3px;
}
.disabled {
    color: #808080;
}
.group-clip .group-body {
    padding-left: 8px;
}
.big-pin {
    width: 48px;
}
.big-copy {
    width: 46px;
}
.big-paste {
    width: 38px;
}
.paste-col {
    width: 46px;
}
.small.cut {
    margin: 4px 0 0 5px;
    gap: 0;
}
.small.cut .ic-small {
    width: 12px;
    margin-right: 4px;
}
.stack {
    display: flex;
    flex-direction: column;
    gap: 6px;
}
.stack-clip {
    margin-left: 6px;
}
.small {
    display: flex;
    align-items: center;
    height: 16px;
    white-space: nowrap;
}
.ic-small {
    width: 15px;
    height: 16px;
    margin-right: 4px;
}
.ic-pin {
    width: 22px;
    height: 22px;
}
.ic-docs {
    width: 25px;
    height: 28px;
}
.ic-clipboard {
    width: 22px;
    height: 28px;
}
.ic-folder-big {
    width: 27px;
    height: 30px;
    margin-left: 6px;
}
.ic-delete {
    width: 25px;
    height: 24px;
}
.ic-rename {
    width: 28px;
    height: 26px;
}
.ic-newfolder {
    width: 18px;
    height: 27px;
}
.ic-prop {
    width: 22px;
    height: 28px;
}
.caret {
    display: block;
    width: 0;
    height: 0;
    margin-top: 1px;
    border-top: 3px solid #333;
    border-left: 3px solid transparent;
    border-right: 3px solid transparent;
}
.caret-side {
    margin: 0 0 0 5px;
}
.group-org .group-body {
    padding-left: 3px;
}
.big-move {
    width: 42px;
}
.vsep {
    width: 1px;
    height: 55px;
    margin: 8px 3px 0 6px;
    background: #dfe1e3;
}
.big-delete {
    width: 42px;
}
.big-rename {
    width: 40px;
}
.group-new .group-body {
    padding-left: 2px;
}
.big-newfolder {
    width: 44px;
}
.stack-new {
    margin-left: 3px;
}
.group-open .group-body {
    padding-left: 3px;
}
.big-prop {
    width: 42px;
}
.stack-open {
    margin: 2px 0 0 6px;
    gap: 9.5px;
}
.stack-open .ic-small {
    width: 14px;
    margin-right: 4px;
}
.group-select .group-body {
    padding-left: 7px;
}

/* address row */
.address-row {
    display: flex;
    height: 41px;
    padding-top: 5px;
    background: #fff;
}
.nav-btns {
    display: flex;
    align-items: center;
    width: 106px;
    height: 30px;
    padding-left: 13px;
}
.window-left .nav-btns {
    width: 104px;
}
.btn-back, .btn-forward {
    width: 12px;
    height: 10px;
}
.btn-forward {
    margin-left: 18px;
}
.btn-down {
    width: 6px;
    height: 4px;
    margin-left: 14px;
}
.btn-up {
    width: 12px;
    height: 12px;
    margin-left: 12px;
}
.address-box {
    display: flex;
    align-items: center;
    width: 790px;
    height: 30px;
    padding-left: 5px;
    border: 1px solid #d9d9d9;
}
.window-left .address-box {
    width: 792px;
}
.crumbs {
    display: flex;
    align-items: center;
    flex: 1;
    white-space: nowrap;
    color: #1f1f1f;
    font-size: 12px;
    letter-spacing: .16px;
}
.crumb-sep {
    width: 4px;
    height: 7px;
    margin: 0 10px;
}
.window-left .crumb-sep {
    margin: 0 11px;
}
.crumb-more {
    margin: -2px 10px 0 9px;
    color: #555;
}
.addr-down {
    width: 10px;
    height: 6px;
    margin-right: 10px;
}
.addr-refresh {
    display: flex;
    align-items: center;
    justify-content: center;
    width: 31px;
    height: 28px;
    border-left: 1px solid #d9d9d9;
}
.ic-refresh {
    width: 12px;
    height: 12px;
}
.search-box {
    display: flex;
    align-items: center;
    justify-content: space-between;
    flex: 1;
    height: 30px;
    margin-left: 12px;
    padding: 0 4px 0 10px;
    border: 1px solid #d9d9d9;
    border-right: none;
    color: #6d6d6d;
    white-space: nowrap;
}
.ic-search {
    width: 12px;
    height: 12px;
}

/* nav tree */
.main {
    display: flex;
    height: 530px;
}
.tree {
    width: 178px;
    height: 530px;
    padding: 17px 2px 0 0;
    border-right: 1px solid #f0f0f0;
    color: #333;
    white-space: nowrap;
}
.tree-item {
    display: flex;
    align-items: center;
    height: 24px;
    padding-left: 33px;
}
.tree-item.top {
    padding-left: 24px;
}
.tree-item.wps {
    margin-bottom: 9px;
}
.tree-item.net {
    margin-top: 8px;
}
.tree-item.current {
    background: #d9d9d9;
}
.ic-top {
    width: 17px;
    height: 15px;
    margin-right: 4px;
}
.ic-item {
    width: 16px;
    height: 16px;
    margin-right: 4px;
}

/* file list */
.files {
    width: 620px;
    margin-left: 15px;
}
.file-head {
    display: grid;
    grid-template-columns: 258px 144px 120px 80px;
    height: 35px;
    padding-top: 2px;
    color: #4f6272;
}
.head-cell {
    position: relative;
    height: 27px;
    line-height: 27px;
    padding-left: 6px;
    border-right: 1px solid #e5e5e5;
}
.head-name {
    padding-left: 3px;
}
.sort-arrow {
    position: absolute;
    top: 2px;
    left: 123px;
    width: 9px;
    height: 5px;
}
.row {
    display: grid;
    grid-template-columns: 258px 144px 120px 76px;
    width: 598px;
    height: 21px;
    line-height: 21px;
    color: #6d6d6d;
}
.row.hover {
    background: #e5f3ff;
}
.window-right .row.sel {
    background: #cce8ff;
    border-top: 1px solid #cce8ff;
}
.window-right .row.sel + .row.sel {
    border-top-color: #99d1ff;
}
.window-right .row.focus {
    border: 1px solid #99d1ff;
}
.window-left .row.sel {
    background: #d9d9d9;
    border-top: 1px solid #d9d9d9;
}
.window-left .row.sel + .row.sel {
    border-top-color: #bcbcbc;
}
.row.sel {
    line-height: 20px;
}
.c-name {
    display: flex;
    align-items: center;
    height: 20px;
    padding-left: 6px;
    color: #1a1a1a;
    white-space: nowrap;
    letter-spacing: .15px;
}
.row:not(.sel) .c-name {
    height: 21px;
}
.ic-file {
    width: 12px;
    height: 16px;
    margin-right: 6px;
}
.hidden-folder {
    opacity: .5;
}
.c-date {
    padding-left: 6px;
}
.c-type {
    padding-left: 5px;
    white-space: nowrap;
}
.c-size {
    padding-right: 5px;
    text-align: right;
}

/* overlays on top of the screenshot */
.red-arrow {
    position: absolute;
    top: 0;
    left: 0;
    width: 1983px;
    height: 689px;
    pointer-events: none;
}
.watermark {
    position: absolute;
    top: 666px;
    left: 1880px;
    font-family: "Liberation Sans", sans-serif;
    font-size: 12.5px;
    color: #a0a0a0;
}
```
